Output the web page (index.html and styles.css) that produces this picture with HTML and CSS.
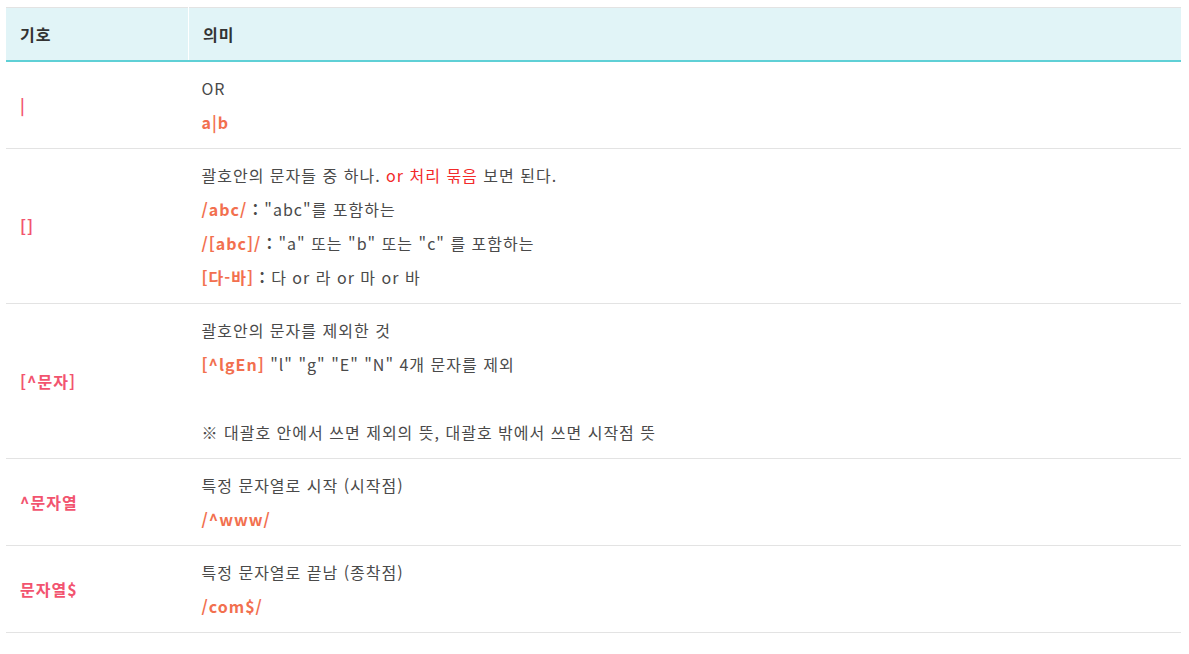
FILE: index.html
```html
<!DOCTYPE html>
<html lang="ko">
<head>
<meta charset="utf-8">
<link rel="stylesheet" href="styles.css">
</head>
<body>
<table class="regex">
  <thead>
    <tr><th class="sym">기호</th><th class="mean">의미</th></tr>
  </thead>
  <tbody>
    <tr>
      <td class="sym">|</td>
      <td class="mean"><p>OR</p><p><b class="code">a|b</b></p></td>
    </tr>
    <tr>
      <td class="sym">[]</td>
      <td class="mean">
        <p>괄호안의 문자들 중 하나. <span class="hl">or 처리 묶음</span> 보면 된다.</p>
        <p><b class="code">/abc/</b> <b>:</b> "abc"를 포함하는</p>
        <p><b class="code">/[abc]/</b> <b>:</b> "a" 또는 "b" 또는 "c" 를 포함하는</p>
        <p><b class="code">[다-바]</b> <b>:</b> 다 or 라 or 마 or 바</p>
      </td>
    </tr>
    <tr>
      <td class="sym">[^문자]</td>
      <td class="mean">
        <p>괄호안의 문자를 제외한 것</p>
        <p><b class="code">[^lgEn]</b> "l" "g" "E" "N" 4개 문자를 제외</p>
        <p>&nbsp;</p>
        <p>※ 대괄호 안에서 쓰면 제외의 뜻, 대괄호 밖에서 쓰면 시작점 뜻</p>
      </td>
    </tr>
    <tr>
      <td class="sym">^문자열</td>
      <td class="mean"><p>특정 문자열로 시작 (시작점)</p><p><b class="code">/^www/</b></p></td>
    </tr>
    <tr>
      <td class="sym">문자열$</td>
      <td class="mean"><p>특정 문자열로 끝남 (종착점)</p><p><b class="code">/com$/</b></p></td>
    </tr>
  </tbody>
</table>
</body>
</html>
```
FILE: styles.css
```css
html, body {
  margin: 0;
  padding: 0;
  background: #fff;
}
body {
  padding: 7px 8px 0 6px;
  font-family: "Noto Sans CJK KR", "Noto Sans", sans-serif;
  font-size: 16px;
  letter-spacing: 1px;
  color: #4a4a4a;
}
.regex {
  width: 100%;
  border-collapse: collapse;
  border-top: 1px solid #e3e3e3;
}
.regex th {
  background: #e1f4f7;
  height: 52px;
  text-align: left;
  font-weight: bold;
  color: #333;
  border-bottom: 2px solid #5fd0d6;
  padding: 0 14px;
}
.regex th.sym {
  border-right: 1px solid #fff;
}
.regex td {
  border-bottom: 1px solid #e3e3e3;
  padding: 9px 14px 9px 14px;
  vertical-align: middle;
}
.regex .sym {
  width: 154px;
}
.regex td.sym {
  color: #f2546f;
  font-weight: bold;
}
.regex td.mean {
  padding-left: 13px;
}
.regex p {
  margin: 0;
  line-height: 34px;
}
.code {
  color: #f2704f;
}
.hl {
  color: #f22a2a;
}
```
